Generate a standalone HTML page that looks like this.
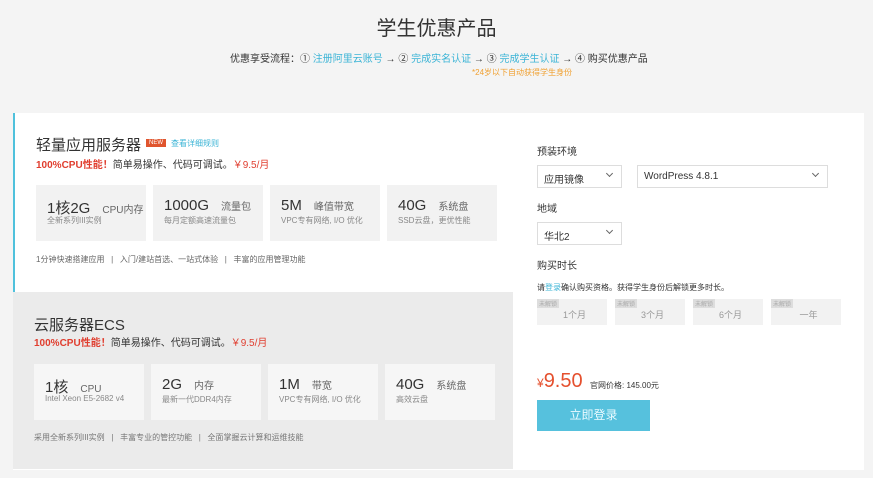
<!DOCTYPE html>
<html><head><meta charset="utf-8"><style>
*{margin:0;padding:0;box-sizing:border-box}
body{width:873px;height:478px;background:#f4f4f4;font-family:"Liberation Sans","Noto Sans CJK SC",sans-serif;color:#333;position:relative;overflow:hidden}
.a{position:absolute;white-space:nowrap}
.blue{color:#3bb4d6}
.red{color:#e03d2e}
.card{position:absolute;width:110px;height:56px;background:#f2f2f2}
.g .card{background:#f6f6f6}
.card .b{position:absolute;left:11px;top:12px;font-size:15px;color:#333}
.card .b span{font-size:10px;color:#666;margin-left:12px}
.card .s{position:absolute;left:11px;top:30px;font-size:8px;color:#888}
.sel{position:absolute;height:23px;border:1px solid #ddd;background:#fff;font-size:10px;color:#333;padding:5px 0 0 6px}
.sel i{position:absolute;right:9px;top:5px;width:5px;height:5px;border-right:1px solid #666;border-bottom:1px solid #666;transform:rotate(45deg)}
.lab{font-size:10px;color:#333}
.lk{position:absolute;width:70px;height:26px;background:#f2f2f2;font-size:9px;color:#999}
.lk b{position:absolute;left:0;top:0;background:#ddd;color:#aaa;font-size:6px;font-weight:normal;padding:0 2px}
.lk span{position:absolute;left:0;right:0;top:9px;text-align:center}
</style></head><body>
<div class="a" style="left:0;width:873px;top:12px;text-align:center;font-size:20px;color:#333">学生优惠产品</div>
<div class="a" style="left:230px;top:50px;font-size:10px;color:#333">优惠享受流程：① <span class="blue">注册阿里云账号</span> → ② <span class="blue">完成实名认证</span> → ③ <span class="blue">完成学生认证</span> → ④ 购买优惠产品</div>
<div class="a" style="left:472px;top:67px;font-size:8px;color:#f0a030">*24岁以下自动获得学生身份</div>

<div class="a" style="left:13px;top:113px;width:851px;height:357px;background:#fff"></div>
<div class="a" style="left:13px;top:113px;width:2px;height:179px;background:#4fc1dc"></div>

<div class="a" style="left:36px;top:134px;font-size:15px;color:#333">轻量应用服务器</div>
<div class="a" style="left:146px;top:139px;font-size:6px;color:#fff;background:#e0552e;padding:0 3px;line-height:8px">NEW</div>
<div class="a blue" style="left:171px;top:138px;font-size:8px">查看详细规则</div>
<div class="a" style="left:36px;top:156px;font-size:10px"><b class="red">100%CPU性能！</b>简单易操作、代码可调试。<span class="red">￥9.5/月</span></div>
<div class="card" style="left:36px;top:185px"><div class="b">1核2G<span>CPU内存</span></div><div class="s">全新系列III实例</div></div>
<div class="card" style="left:153px;top:185px"><div class="b">1000G<span>流量包</span></div><div class="s">每月定额高速流量包</div></div>
<div class="card" style="left:270px;top:185px"><div class="b">5M<span>峰值带宽</span></div><div class="s">VPC专有网络, I/O 优化</div></div>
<div class="card" style="left:387px;top:185px"><div class="b">40G<span>系统盘</span></div><div class="s">SSD云盘，更优性能</div></div>
<div class="a" style="left:36px;top:254px;font-size:8px;color:#666">1分钟快速搭建应用 &nbsp;&nbsp;| &nbsp;&nbsp;入门/建站首选、一站式体验 &nbsp;&nbsp;| &nbsp;&nbsp;丰富的应用管理功能</div>

<div class="a g" style="left:13px;top:292px;width:500px;height:177px;background:#ebebeb">
<div class="a" style="left:21px;top:22px;font-size:15px;color:#333">云服务器ECS</div>
<div class="a" style="left:21px;top:42px;font-size:10px"><b class="red">100%CPU性能！</b>简单易操作、代码可调试。<span class="red">￥9.5/月</span></div>
<div class="card" style="left:21px;top:72px"><div class="b">1核<span>CPU</span></div><div class="s">Intel Xeon E5-2682 v4</div></div>
<div class="card" style="left:138px;top:72px"><div class="b">2G<span>内存</span></div><div class="s">最新一代DDR4内存</div></div>
<div class="card" style="left:255px;top:72px"><div class="b">1M<span>带宽</span></div><div class="s">VPC专有网络, I/O 优化</div></div>
<div class="card" style="left:372px;top:72px"><div class="b">40G<span>系统盘</span></div><div class="s">高效云盘</div></div>
<div class="a" style="left:21px;top:140px;font-size:8px;color:#777">采用全新系列III实例 &nbsp;&nbsp;| &nbsp;&nbsp;丰富专业的管控功能 &nbsp;&nbsp;| &nbsp;&nbsp;全面掌握云计算和运维技能</div>
</div>

<div class="a lab" style="left:537px;top:143px">预装环境</div>
<div class="sel" style="left:537px;top:165px;width:85px">应用镜像<i></i></div>
<div class="sel" style="left:637px;top:165px;width:191px">WordPress 4.8.1<i></i></div>
<div class="a lab" style="left:537px;top:200px">地域</div>
<div class="sel" style="left:537px;top:222px;width:85px">华北2<i></i></div>
<div class="a lab" style="left:537px;top:257px">购买时长</div>
<div class="a" style="left:537px;top:282px;font-size:8px;color:#333">请<span class="blue">登录</span>确认购买资格。获得学生身份后解锁更多时长。</div>
<div class="lk" style="left:537px;top:299px"><b>未解锁</b><span>&nbsp;&nbsp;1个月</span></div>
<div class="lk" style="left:615px;top:299px"><b>未解锁</b><span>&nbsp;&nbsp;3个月</span></div>
<div class="lk" style="left:693px;top:299px"><b>未解锁</b><span>&nbsp;&nbsp;6个月</span></div>
<div class="lk" style="left:771px;top:299px"><b>未解锁</b><span>&nbsp;&nbsp;一年</span></div>
<div class="a" style="left:537px;top:370px;color:#e5502e"><span style="font-size:12px">¥</span><span style="font-size:20px">9.50</span></div>
<div class="a" style="left:590px;top:380px;font-size:8px;color:#333">官网价格: 145.00元</div>
<div class="a" style="left:537px;top:400px;width:113px;height:31px;background:#56c1dd;color:#eafaff;font-size:12px;text-align:center;line-height:31px">立即登录</div>
</body></html>
